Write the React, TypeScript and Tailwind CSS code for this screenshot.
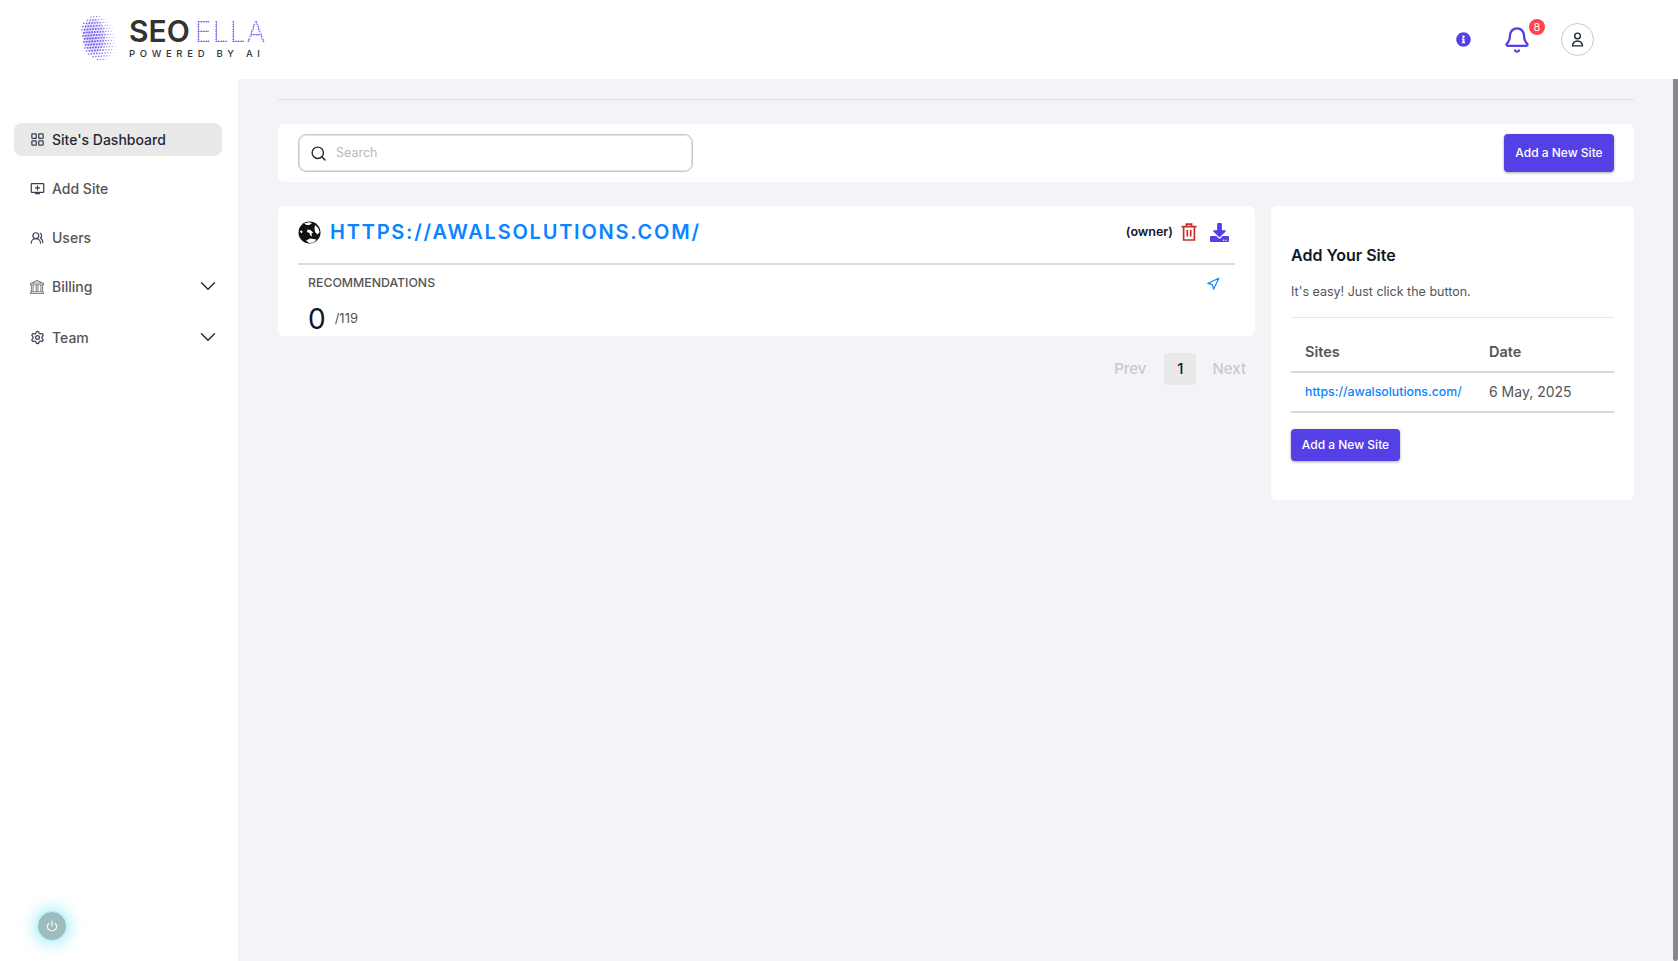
import { Bell, ChevronDown, LayoutGrid, Navigation, Power, Search, Settings, UsersRound } from "lucide-react";
import { BsBank } from "react-icons/bs";
import { FaDownload, FaInfoCircle } from "react-icons/fa";
import { HiOutlineUser } from "react-icons/hi";
import { MdOutlineAddToQueue } from "react-icons/md";

const NAV = [
  { label: "Site's Dashboard", icon: <LayoutGrid size={15} />, active: true },
  { label: "Add Site", icon: <MdOutlineAddToQueue size={15} /> },
  { label: "Users", icon: <UsersRound size={14} /> },
  { label: "Billing", icon: <BsBank size={14} className="text-[#666666]" />, more: true },
  { label: "Team", icon: <Settings size={15} />, more: true },
];

// dotted ball of the logo
function Sphere() {
  const dots = [];
  for (let row = 0; row < 15; row++) {
    for (let col = 0; col < 12; col++) {
      const u = (col + (row % 2 ? 0.5 : 0) - 5.5) / 6.2;
      const v = (row - 7) / 7.4;
      if (u * u + v * v > 1) continue;
      const x = 17.5 + u * 17 + v * 3.5;
      const y = 23 + v * 22.5 - u * 1;
      const rim = Math.sqrt(u * u + v * v);
      const fade = (u + 1) / 2;
      const r = Math.max(0.4, (1.5 - fade * 0.8) * (1 - rim * rim * 0.45));
      dots.push(<circle key={`${row}-${col}`} cx={x} cy={y} r={r} fill="#6d4df0" opacity={1 - fade * 0.45} />);
    }
  }
  return (
    <svg width="38" height="46" viewBox="0 0 38 46">
      <ellipse cx="13" cy="21" rx="11" ry="17" fill="#a48ff5" opacity="0.25" />
      {dots}
    </svg>
  );
}

function Logo() {
  return (
    <div className="flex items-center gap-[10px] ml-[81px] -mt-[4px]">
      <Sphere />
      <div className="w-[134px]">
        <div className="flex items-baseline h-[29px] leading-[29px]">
          <span className="text-[30px] font-semibold text-[#333333]">SEO</span>
          <span className="ml-[5px] text-[28px] font-light tracking-[1.2px] text-transparent bg-clip-text bg-[radial-gradient(circle,#8b5cf6_1px,transparent_1.1px)] bg-[length:2.5px_2.5px]">
            ELLA
          </span>
        </div>
        <div className="mt-[3px] text-[9.5px] leading-[10px] font-medium text-[#333333] tracking-[4.7px] whitespace-nowrap">
          POWERED BY AI
        </div>
      </div>
    </div>
  );
}

function GlobeMark() {
  return (
    <svg width="23" height="23" viewBox="0 0 23 23" className="mr-[9px] shrink-0">
      <circle cx="11.5" cy="11.5" r="11" fill="#111111" />
      <path d="M6 2.5l5-1.2 3 .8-2.5 2-3-.2zM17 4l3.2 3 1.4 4-2 2.4-2.4-2.2-.8-3.6zM9.5 8.5l3 .6 2.6 2.4-1.8 1.4 1 2.4-2.2-.8-.6-2.4-2.6-1zM1.8 10l2.2-.6.6 1.8-1.6 1zM8 19.6l4-2 5 .6 1.6.6-3 2.6-4.4.6z" fill="#ffffff" />
    </svg>
  );
}

function BinMark() {
  return (
    <svg width="16" height="18" viewBox="0 0 16 18" fill="none" stroke="#c9302c" strokeWidth="1.7" className="ml-[8px] shrink-0">
      <path d="M0.5 3.6h15M5.4 3.4V1.2h5.2v2.2M2.6 3.6v13.4h10.8V3.6" />
      <path d="M6.3 7v6.4M9.7 7v6.4" />
    </svg>
  );
}

function AddButton({ big }: { big?: boolean }) {
  return (
    <button
      className={`rounded bg-[#5540e8] text-white text-[12px] font-medium shadow-[0_1px_3px_rgba(0,0,0,0.35)] ${big ? "w-[110px] h-[38px]" : "w-[109px] h-[32px]"}`}
    >
      Add a New Site
    </button>
  );
}

export default function App() {
  return (
    <div className="h-[961px] flex flex-col overflow-hidden bg-white font-['Inter',sans-serif]">
      <header className="h-[79px] shrink-0 flex items-center justify-between bg-white">
        <Logo />
        <div className="flex items-center mr-[84px]">
          <FaInfoCircle size={15} className="text-[#5540e8] mr-[32px]" />
          <div className="relative mr-[30px]">
            <Bell size={28} strokeWidth={2} className="text-[#5540e8]" />
            <span className="absolute -top-[7px] left-[26px] w-[16px] h-[16px] rounded-full bg-[#ff444f] text-white text-[11px] leading-[16px] text-center">
              8
            </span>
          </div>
          <div className="w-[33px] h-[33px] rounded-full border border-[#c9c9c9] flex items-center justify-center text-[#1f2937]">
            <HiOutlineUser size={17} />
          </div>
        </div>
      </header>

      <div className="flex-1 flex min-h-0">
        <aside className="w-[238px] shrink-0 bg-white flex flex-col pl-[14px] pr-[16px] pt-[44px] pb-[20px]">
          <nav className="flex flex-col gap-[16px]">
            {NAV.map((n) => (
              <a
                key={n.label}
                className={`h-[33px] flex items-center pl-[16px] pr-[1px] rounded-lg text-[14px] font-medium ${n.active ? "bg-[#e9e9ea] text-[#1f2937]" : "text-[#555555]"} ${n.label === "Team" ? "mt-[2px]" : ""}`}
              >
                <span className="w-[22px] shrink-0 text-[#374151]">{n.icon}</span>
                {n.label}
                {n.more && <ChevronDown size={26} strokeWidth={1.3} className="ml-auto -mt-[1px] text-[#1f2937]" />}
              </a>
            ))}
          </nav>
          <button className="mt-auto ml-[23px] w-[30px] h-[30px] rounded-full bg-[#9dbcc0] border border-[#b8f4fb] shadow-[0_0_14px_4px_rgba(80,225,245,0.45)] flex items-center justify-center text-white">
            <Power size={12} strokeWidth={2.4} />
          </button>
        </aside>

        <main className="flex-1 bg-[#f3f4f8] pl-[40px] pr-[39px] pt-[20px]">
          <div className="h-px bg-[#dcdcf6]" />

          <div className="mt-[24px] h-[58px] bg-white rounded-md flex items-center justify-between px-[20px]">
            <div className="w-[395px] h-[38px] rounded-lg border border-[#c9c9c9] flex items-center pl-[11px] gap-[9px] shadow-[inset_0_0_0_1px_#e2e2e2]">
              <Search size={17} className="text-[#1f2937]" />
              <span className="text-[12.5px] text-[#b9b9bd]">Search</span>
            </div>
            <AddButton big />
          </div>

          <div className="mt-[24px] grid grid-cols-[977px_363px] gap-[16px] items-start">
            <div>
              <div className="h-[130px] bg-white rounded-md px-[20px] flex flex-col">
                <div className="h-[59px] shrink-0 flex items-center pb-[5px] border-b-2 border-[#d9d9d9]">
                  <GlobeMark />
                  <span className="text-[20px] font-semibold tracking-[1.77px] text-[#0a84ff]">HTTPS://AWALSOLUTIONS.COM/</span>
                  <span className="ml-auto text-[12.5px] font-semibold text-[#111827]">(owner)</span>
                  <BinMark />
                  <FaDownload size={19} className="ml-[13px] mr-[6px] text-[#5540e8]" />
                </div>
                <div className="flex justify-between pl-[10px] pr-[15px] pt-[9px]">
                  <span className="text-[12.3px] leading-[18px] font-medium text-[#555555]">RECOMMENDATIONS</span>
                  <Navigation size={14} className="mt-[3px] text-[#0a84ff]" />
                </div>
                <div className="flex items-center pl-[10px] mt-[10px]">
                  <span className="text-[28px] leading-[34px] text-[#0f172a]">0</span>
                  <span className="ml-[9px] text-[13px] text-[#555555]">/119</span>
                </div>
              </div>

              <div className="mt-[17px] flex items-center justify-end pr-[9px] text-[15px] font-medium text-[#c8c9cc]">
                <span>Prev</span>
                <span className="ml-[18px] mr-[16px] w-[32px] h-[32px] rounded bg-[#e9e9ea] text-[#111827] flex items-center justify-center">1</span>
                <span>Next</span>
              </div>
            </div>

            <div className="h-[294px] bg-white rounded-md p-[20px]">
              <h2 className="mt-[19px] text-[16px] leading-[20px] font-semibold text-[#0f172a]">Add Your Site</h2>
              <p className="mt-[18px] text-[12.5px] leading-[18px] text-[#555555]">It's easy! Just click the button.</p>
              <div className="mt-[16px] h-px bg-[#e6e6fa]" />
              <table className="w-full text-left">
                <thead>
                  <tr className="border-b-2 border-[#d9d9d9] h-[54px] text-[14.5px] font-semibold text-[#555555]">
                    <th className="pl-[14px] pt-[15px] w-[198px] font-semibold">Sites</th>
                    <th className="pt-[15px] font-semibold">Date</th>
                  </tr>
                </thead>
                <tbody>
                  <tr className="border-b-2 border-[#d9d9d9] h-[40px]">
                    <td className="pl-[14px] text-[12.3px] font-medium text-[#0a84ff]">https://awalsolutions.com/</td>
                    <td className="pb-[1px] text-[14px] text-[#555555]">6 May, 2025</td>
                  </tr>
                </tbody>
              </table>
              <div className="mt-[16px]">
                <AddButton />
              </div>
            </div>
          </div>
        </main>

        <div className="w-[5px] shrink-0 bg-[#888888] rounded-b-sm" />
      </div>
    </div>
  );
}
